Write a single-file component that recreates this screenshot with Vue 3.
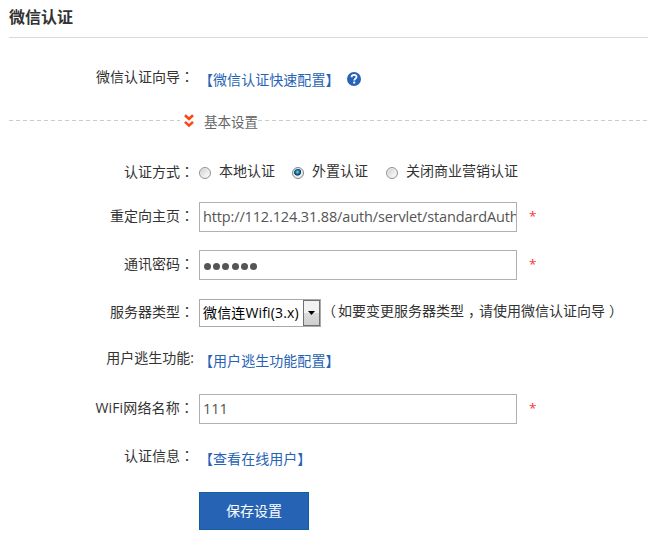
<script setup>
import { ref } from 'vue'

const mode = ref('外置认证')
const modes = ['本地认证', '外置认证', '关闭商业营销认证']
const redirect = 'http://112.124.31.88/auth/servlet/standardAuth'
</script>

<template>
  <main class="page">
    <h1 class="title">微信认证</h1>

    <div class="row guide">
      <label class="label">微信认证向导<span class="punct">：</span></label>
      <a class="link">【微信认证快速配置】</a>
      <svg class="help" width="14" height="14" viewBox="0 0 14 14">
        <circle cx="7" cy="7" r="7" fill="#2763b5" />
        <path d="M4.6 5.2C4.7 3.6 5.7 2.9 7.1 2.9c1.4 0 2.4.8 2.4 2 0 1.7-2.3 1.7-2.3 3.6" fill="none" stroke="#fff" stroke-width="1.8" />
        <rect x="6.2" y="9.6" width="2" height="1.9" fill="#fff" />
      </svg>
    </div>

    <div class="section">
      <i class="dash lead"></i>
      <svg class="chevrons" width="10" height="14" viewBox="0 0 10 14">
        <path d="M1 1.2 5 4.9 9 1.2M1 7.9 5 11.6 9 7.9" fill="none" stroke="#ff4411" stroke-width="2.6" />
      </svg>
      <span class="section-name">基本设置</span>
      <i class="dash rest"></i>
    </div>

    <div class="row modes">
      <label class="label">认证方式<span class="punct">：</span></label>
      <label v-for="m in modes" :key="m" class="option" @click="mode = m">
        <span class="radio" :class="{ on: mode === m }"></span>
        <span class="option-text">{{ m }}</span>
      </label>
    </div>

    <div class="row">
      <label class="label">重定向主页<span class="punct">：</span></label>
      <div class="input"><span class="value url">{{ redirect }}</span></div>
      <span class="star">*</span>
    </div>

    <div class="row">
      <label class="label">通讯密码<span class="punct">：</span></label>
      <div class="input"><span class="dots"><i v-for="n in 6" :key="n"></i></span></div>
      <span class="star">*</span>
    </div>

    <div class="row">
      <label class="label">服务器类型<span class="punct">：</span></label>
      <div class="select">
        <span class="select-text">微信连Wifi(3.x)</span>
        <span class="arrow">
          <svg width="7" height="4" viewBox="0 0 7 4"><path d="M0 0H7L3.5 4Z" fill="#000" /></svg>
        </span>
      </div>
      <span class="note"><span class="open">（</span>如要变更服务器类型<span class="comma">，</span>请使用微信认证向导<span class="close">）</span></span>
    </div>

    <div class="row escape">
      <label class="label">用户逃生功能:</label>
      <a class="link">【用户逃生功能配置】</a>
    </div>

    <div class="row wifi">
      <label class="label">WiFi网络名称<span class="punct">：</span></label>
      <div class="input"><span class="value">111</span></div>
      <span class="star">*</span>
    </div>

    <div class="row info">
      <label class="label">认证信息<span class="punct">：</span></label>
      <a class="link">【查看在线用户】</a>
    </div>

    <button class="save">保存设置</button>
  </main>
</template>

<style>
body {
  margin: 0;
  background: #fff;
}
</style>

<style scoped>
.page {
  width: 648px;
  height: 543px;
  overflow: hidden;
  font: 14px/20px "Open Sans", "Noto Sans CJK SC", sans-serif;
  color: #333;
  white-space: nowrap;
}
.title {
  box-sizing: border-box;
  height: 38px;
  margin: 0 0 0 9px;
  padding-top: 7px;
  border-bottom: 1px solid #d9d9d9;
  font-size: 16px;
  line-height: 20px;
  font-weight: 700;
}
.row {
  display: flex;
  align-items: center;
  height: 48px;
}
.guide {
  height: 82px;
}
.label {
  width: 194px;
  margin-right: 5px;
  padding-bottom: 4px;
  text-align: right;
}
.guide .label {
  padding-bottom: 5px;
}
.wifi .label {
  letter-spacing: 0.15px;
}
.punct {
  font-family: "Noto Sans CJK TC", sans-serif;
}
.link {
  padding-top: 1px;
  color: #2763b5;
  letter-spacing: 0.05px;
}
.escape .link {
  padding-top: 0;
  margin-top: -1px;
}
.info .link {
  padding-top: 4px;
}
.help {
  margin-left: 7.4px;
}
.section {
  display: flex;
  align-items: center;
  height: 2px;
  color: #666;
  font-size: 13.5px;
}
.dash {
  height: 1px;
  margin-bottom: 2px;
  background: repeating-linear-gradient(90deg, #ccc 0 4px, transparent 4px 7px);
}
.lead {
  width: 171px;
  margin-left: 9px;
}
.rest {
  flex: 1;
}
.chevrons {
  margin: 0 10px 0 4px;
}
.section-name {
  padding-top: 1px;
}
.modes {
  box-sizing: border-box;
  align-items: flex-start;
  height: 71px;
  padding-top: 39px;
}
.option {
  display: flex;
  align-items: flex-start;
  margin-right: 17px;
}
.option + .option + .option {
  margin-left: 1px;
}
.radio {
  box-sizing: border-box;
  width: 12px;
  height: 12px;
  margin: 6px 8px 0 0;
  border: 1px solid #929292;
  border-radius: 50%;
  background: linear-gradient(135deg, #c8ccd0, #f6f6f6 75%);
  box-shadow: inset 0 0 0 1px #eee;
}
.radio.on {
  border-color: #7d8790;
  background: radial-gradient(circle at 45% 40%, #8bdcf8 0, #248bb5 1.5px, #0b3556 3.2px, #e8edf0 4px);
}
.input {
  box-sizing: border-box;
  display: flex;
  align-items: center;
  width: 318px;
  height: 30px;
  padding-left: 3px;
  overflow: hidden;
  border: 1px solid #b0b0b0;
  color: #555;
}
.value {
  width: 314px;
  overflow: hidden;
  font-size: 14.5px;
}
.url {
  letter-spacing: -0.14px;
}
.dots {
  display: flex;
  gap: 2.2px;
  padding: 3px 0 0 1px;
}
.dots i {
  width: 7px;
  height: 7px;
  border-radius: 50%;
  background: #555;
}
.star {
  margin-left: 12px;
  padding-bottom: 2px;
  color: #f33;
  font-size: 13.5px;
}
.select {
  box-sizing: border-box;
  display: flex;
  width: 122px;
  height: 28px;
  border: 1px solid #aaa;
  color: #000;
}
.select-text {
  width: 103px;
  padding: 3px 0 0 3px;
  box-sizing: border-box;
  letter-spacing: 0.15px;
}
.arrow {
  box-sizing: border-box;
  display: flex;
  align-items: center;
  justify-content: center;
  width: 17px;
  height: 26px;
  border: 1px solid #707070;
  background: linear-gradient(#f2f2f2 0 50%, #dcdcdc 50%, #cfcfcf);
}
.note {
  margin-left: 3px;
  padding-bottom: 4px;
}
.open {
  margin: 0 2px 0 -2px;
}
.comma {
  display: inline-block;
  width: 11px;
  padding-left: 4px;
}
.close {
  padding-left: 4px;
}
.escape .label {
  padding-bottom: 6px;
}
.save {
  display: block;
  box-sizing: border-box;
  width: 110px;
  height: 38px;
  margin: 11px 0 0 199px;
  padding: 0;
  border: 1px solid #0d629b;
  background: #2763b5;
  color: #fff;
  font: inherit;
}
</style>
